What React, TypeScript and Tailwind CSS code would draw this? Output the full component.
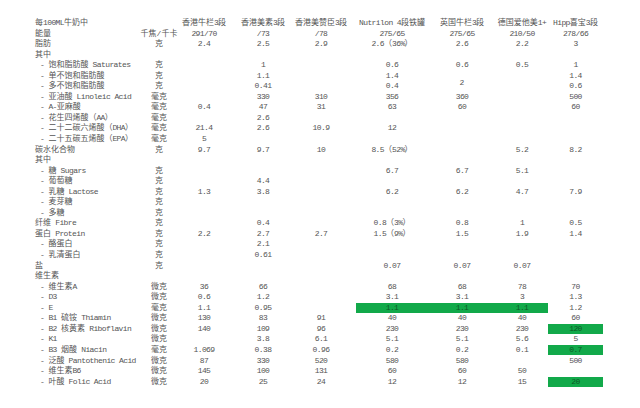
import React from "react";

type Row = {
  label: string;
  sub?: boolean;
  unit?: string;
  vals?: string[];
  green?: number[];
};

// c1..c7: 香港牛栏 / 香港美素 / 香港美赞臣 / Nutrilon / 英国牛栏 / 德国爱他美 / Hipp
const rows: Row[] = [
  {
    label: "每100ML牛奶中",
    vals: ["香港牛栏3段", "香港美素3段", "香港美赞臣3段", "Nutrilon 4段铁罐", "英国牛栏3段", "德国爱他美1+", "Hipp喜宝3段"],
  },
  { label: "能量", unit: "千焦/千卡", vals: ["291/70", "/73", "/78", "275/65", "275/65", "210/50", "278/66"] },
  { label: "脂肪", unit: "克", vals: ["2.4", "2.5", "2.9", "2.6（36%）", "2.6", "2.2", "3"] },
  { label: "其中" },
  { label: "饱和脂肪酸 Saturates", sub: true, unit: "克", vals: ["", "1", "", "0.6", "0.6", "0.5", "1"] },
  { label: "单不饱和脂肪酸", sub: true, unit: "克", vals: ["", "1.1", "", "1.4", "MERGE", "", "1.4"] },
  { label: "多不饱和脂肪酸", sub: true, unit: "克", vals: ["", "0.41", "", "0.4", "SKIP", "", "0.6"] },
  { label: "亚油酸 Linoleic Acid", sub: true, unit: "毫克", vals: ["", "330", "310", "356", "360", "", "500"] },
  { label: "A-亚麻酸", sub: true, unit: "毫克", vals: ["0.4", "47", "31", "63", "60", "", "60"] },
  { label: "花生四烯酸（AA）", sub: true, unit: "毫克", vals: ["", "2.6", "", "", "", "", ""] },
  { label: "二十二碳六烯酸（DHA）", sub: true, unit: "毫克", vals: ["21.4", "2.6", "10.9", "12", "", "", ""] },
  { label: "二十五碳五烯酸（EPA）", sub: true, unit: "毫克", vals: ["5", "", "", "", "", "", ""] },
  { label: "碳水化合物", unit: "克", vals: ["9.7", "9.7", "10", "8.5（52%）", "", "5.2", "8.2"] },
  { label: "其中" },
  { label: "糖 Sugars", sub: true, unit: "克", vals: ["", "", "", "6.7", "6.7", "5.1", ""] },
  { label: "葡萄糖", sub: true, unit: "克", vals: ["", "4.4", "", "", "", "", ""] },
  { label: "乳糖 Lactose", sub: true, unit: "克", vals: ["1.3", "3.8", "", "6.2", "6.2", "4.7", "7.9"] },
  { label: "麦芽糖", sub: true, unit: "克" },
  { label: "多糖", sub: true, unit: "克" },
  { label: "纤维 Fibre", unit: "克", vals: ["", "0.4", "", "0.8（3%）", "0.8", "1", "0.5"] },
  { label: "蛋白 Protein", unit: "克", vals: ["2.2", "2.7", "2.7", "1.5（9%）", "1.5", "1.9", "1.4"] },
  { label: "酪蛋白", sub: true, unit: "克", vals: ["", "2.1", "", "", "", "", ""] },
  { label: "乳清蛋白", sub: true, unit: "克", vals: ["", "0.61", "", "", "", "", ""] },
  { label: "盐", unit: "克", vals: ["", "", "", "0.07", "0.07", "0.07", ""] },
  { label: "维生素" },
  { label: "维生素A", sub: true, unit: "微克", vals: ["36", "66", "", "68", "68", "78", "70"] },
  { label: "D3", sub: true, unit: "微克", vals: ["0.6", "1.2", "", "3.1", "3.1", "3", "1.3"] },
  { label: "E", sub: true, unit: "毫克", vals: ["1.1", "0.95", "", "1.1", "1.1", "1.1", "1.2"], green: [3, 4, 5] },
  { label: "B1 硫铵 Thiamin", sub: true, unit: "微克", vals: ["130", "83", "91", "40", "40", "40", "60"] },
  { label: "B2 核黄素 Riboflavin", sub: true, unit: "微克", vals: ["140", "109", "96", "230", "230", "230", "120"], green: [6] },
  { label: "K1", sub: true, unit: "微克", vals: ["", "3.8", "6.1", "5.1", "5.1", "5.6", "5"] },
  { label: "B3 烟酸 Niacin", sub: true, unit: "毫克", vals: ["1.069", "0.38", "0.96", "0.2", "0.2", "0.1", "0.7"], green: [6] },
  { label: "泛酸 Pantothenic Acid", sub: true, unit: "微克", vals: ["87", "330", "520", "580", "580", "", "500"] },
  { label: "维生素B6", sub: true, unit: "微克", vals: ["145", "100", "131", "60", "60", "50", ""] },
  { label: "叶酸 Folic Acid", sub: true, unit: "微克", vals: ["20", "25", "24", "12", "12", "15", "20"], green: [6] },
];

const cell = "flex items-center justify-center whitespace-nowrap";

// latin runs are a bit narrower than a plain mono font in the original sheet
function Txt({ s }: { s: string }) {
  const parts = s.match(/[\x20-\x7e]+|[^\x20-\x7e]+/g) ?? [];
  return (
    <>
      {parts.map((p, k) =>
        /^[\x20-\x7e]+$/.test(p) ? (
          <span key={k} className="tracking-[-0.6px]">
            {p}
          </span>
        ) : (
          <span key={k}>{p}</span>
        )
      )}
    </>
  );
}

export default function App() {
  return (
    <div
      className="w-[640px] h-[408px] bg-white pl-[35px] pt-[18px] text-[8px] text-[#555] overflow-hidden"
      style={{ fontFamily: '"Liberation Mono", "Noto Sans CJK SC", monospace' }}
    >
      <div className="grid grid-cols-[115px_18px_72px_46px_70px_72px_68px_52px_55px] auto-rows-[10.56px] leading-[10.56px]">
        {rows.map((r, i) => {
          const vals = r.vals ?? ["", "", "", "", "", "", ""];
          return (
            <React.Fragment key={i}>
              <div className={`whitespace-nowrap ${r.sub ? "pl-[5px]" : ""}`}>
                <Txt s={r.sub ? `- ${r.label}` : r.label} />
              </div>
              <div className={cell}>{r.unit ?? ""}</div>
              {vals.map((v, j) => {
                if (v === "SKIP") return null;
                if (v === "MERGE")
                  return (
                    <div key={j} className={`${cell} row-span-2 pt-[3px]`}>
                      2
                    </div>
                  );
                const isGreen = r.green?.includes(j);
                return (
                  <div
                    key={j}
                    className={`${cell} ${isGreen ? "bg-[#12a94a] text-[#0d5a27] my-[0.5px]" : ""}`}
                  >
                    <Txt s={v} />
                  </div>
                );
              })}
            </React.Fragment>
          );
        })}
      </div>
    </div>
  );
}
